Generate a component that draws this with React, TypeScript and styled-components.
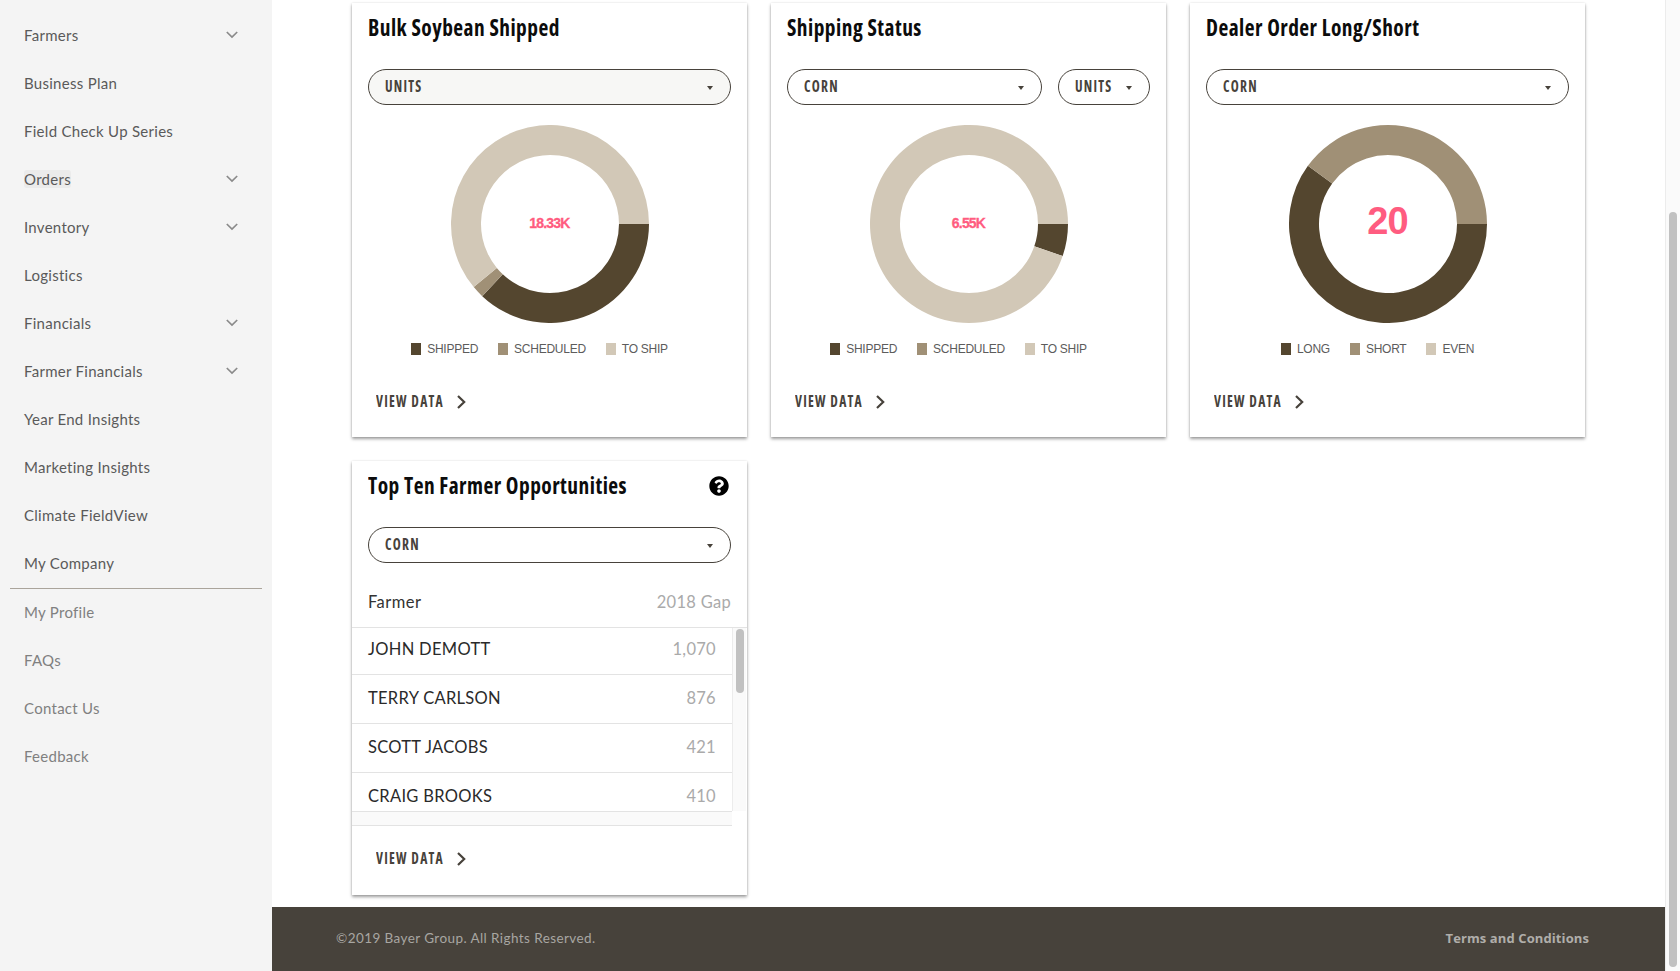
import React, { useLayoutEffect, useRef } from 'react';
import styled, { createGlobalStyle } from 'styled-components';
import { FaQuestionCircle } from 'react-icons/fa';

const Global = createGlobalStyle`
  html, body { margin: 0; padding: 0; height: 100%; overflow: hidden; background: #fff; }
  #root { height: 100%; }
  * { box-sizing: border-box; }
`;

const DARK = '#54462f';
const MID = '#a09076';
const LIGHT = '#d2c8b7';
const BODY_FONT = 'Lato, "Open Sans", sans-serif';
const COND_FONT = '"Open Sans", sans-serif';

const Shell = styled.div`
  display: flex;
  height: 100vh;
  font-family: ${BODY_FONT};
`;
const Scroller = styled.div`
  flex: 1;
  min-width: 0;
  overflow: hidden;
`;
const PageTrack = styled.div`
  width: 15px;
  flex: none;
  display: flex;
  background: #fafafa;
  border-left: 1px solid #ececec;
`;
const PageThumb = styled.div`
  flex: 1;
  margin: 212px 3px 4px 3px;
  border-radius: 4px;
  background: #c1c1c1;
`;
const Page = styled.div`
  display: flex;
  min-height: 1242px;
`;
const Sidebar = styled.nav`
  width: 272px;
  flex: none;
  background: #f4f4f4;
  padding-top: 283px;
`;
const NavItem = styled.a<{ $muted?: boolean }>`
  display: flex;
  align-items: center;
  justify-content: space-between;
  height: 48px;
  padding: 0 34px 2px 24px;
  font-size: 15px;
  letter-spacing: 0.28px;
  color: ${p => (p.$muted ? '#808080' : '#5a5a5a')};
`;
const NavLabel = styled.span<{ $hover?: boolean }>`
  border-radius: 3px;
  background: ${p => (p.$hover ? '#ebebeb' : 'transparent')};
`;
const Divider = styled.hr`
  margin: 0 10px;
  border: 0;
  border-top: 1px solid #aaa49b;
`;
const Main = styled.div`
  flex: 1;
  min-width: 0;
  display: flex;
  flex-direction: column;
`;
const Content = styled.main`
  flex: 1;
  padding: 274px 0 12px 80px;
  display: grid;
  grid-template-columns: repeat(3, 395px);
  grid-auto-rows: 434px;
  gap: 24px;
`;
const Card = styled.section`
  background: #fff;
  padding: 12px 16px 0;
  box-shadow: 0 2px 3px rgba(0, 0, 0, 0.38), 0 0 2px rgba(0, 0, 0, 0.1);
  display: flex;
  flex-direction: column;
`;
const TitleRow = styled.header`
  display: flex;
  align-items: center;
  justify-content: space-between;
  height: 26px;
  color: #000;
  svg { margin-right: 2px; }
`;
const Title = styled.h2`
  margin: -3px 0 0;
  font-family: ${COND_FONT};
  font-stretch: 75%;
  font-weight: 700;
  font-size: 23px;
  letter-spacing: 0.5px;
  line-height: 26px;
  color: #0c0c0c;
  white-space: nowrap;
  transform: scaleX(0.93);
  transform-origin: left center;
`;
const Selects = styled.div`
  display: flex;
  gap: 16px;
  margin-top: 28px;
`;
const Select = styled.div<{ $width?: number; $shaded?: boolean }>`
  flex: ${p => (p.$width ? `0 0 ${p.$width}px` : 1)};
  height: 36px;
  border: 1px solid #47423b;
  border-radius: 18px;
  background: ${p => (p.$shaded ? '#f7f7f5' : '#fff')};
  display: flex;
  align-items: center;
  justify-content: space-between;
  padding: 0 17px 0 16px;
`;
const CondLabel = styled.span`
  font-family: ${COND_FONT};
  font-stretch: 75%;
  font-weight: 700;
  font-size: 16.5px;
  line-height: 20px;
  letter-spacing: 1.5px;
  color: #47423b;
  transform: scaleX(0.82);
  transform-origin: left center;
  margin-top: -3px;
`;
const Caret = styled.i`
  width: 0;
  height: 0;
  margin-top: 2px;
  border-left: 3.5px solid transparent;
  border-right: 3.5px solid transparent;
  border-top: 4px solid #47423b;
`;
const ChartBox = styled.div`
  position: relative;
  width: 198px;
  height: 198px;
  margin: 20px auto 0;
`;
const CenterValue = styled.span<{ $large?: boolean }>`
  position: absolute;
  left: 0;
  right: 0;
  top: ${p => (p.$large ? 77 : 91)}px;
  text-align: center;
  font-family: "Liberation Sans", Arial, sans-serif;
  font-weight: 700;
  color: #ff5c80;
  font-size: ${p => (p.$large ? '38px' : '14px')};
  line-height: 1;
  letter-spacing: ${p => (p.$large ? '-1px' : '-0.8px')};
  -webkit-text-stroke: ${p => (p.$large ? '0' : '0.3px')} #ff5c80;
`;
const Legend = styled.ul`
  list-style: none;
  margin: 18px 0 0;
  padding: 0 20px 0 0;
  display: flex;
  justify-content: center;
  gap: 20px;
  height: 16px;
`;
const LegendItem = styled.li`
  display: flex;
  align-items: center;
  gap: 6px;
  font-family: "Liberation Sans", Arial, sans-serif;
  font-size: 12px;
  letter-spacing: -0.25px;
  color: #5c5c5c;
`;
const Swatch = styled.i<{ $color: string }>`
  width: 10px;
  height: 12px;
  background: ${p => p.$color};
`;
const ViewData = styled.a<{ $gap: number }>`
  display: flex;
  align-items: center;
  gap: 14px;
  height: 20px;
  margin: ${p => p.$gap}px 0 0 8px;
  ${CondLabel} { margin-right: -16px; }
`;
const HeaderRow = styled.div`
  display: flex;
  justify-content: space-between;
  align-items: center;
  height: 22px;
  margin-top: 28px;
  font-size: 16.5px;
  letter-spacing: 0.45px;
  color: #333;
`;
const MutedHead = styled.span`
  color: #aaa;
  letter-spacing: 0.3px;
`;
const List = styled.div`
  margin: 14px -16px 0;
  border-top: 1px solid #e3e3e3;
`;
const ListBody = styled.div`
  display: flex;
  height: 183px;
`;
const Rows = styled.div`
  width: 380px;
  flex: none;
  overflow: hidden;
`;
const VTrack = styled.div`
  width: 14px;
  background: #fafafa;
  border-left: 1px solid #ececec;
`;
const VThumb = styled.div`
  width: 8px;
  height: 64px;
  margin: 1px 0 0 3px;
  border-radius: 4px;
  background: #c1c1c1;
`;
const HTrack = styled.div`
  width: 380px;
  height: 15px;
  background: #fafafa;
  border-top: 1px solid #e3e3e3;
  border-bottom: 1px solid #e3e3e3;
`;
const Row = styled.div`
  display: flex;
  align-items: center;
  justify-content: space-between;
  height: 49px;
  padding: 0 16px 2px;
  border-bottom: 1px solid #e3e3e3;
  font-size: 16.5px;
  letter-spacing: 0.3px;
  color: #2a2a2a;
  &:first-child { height: 47px; padding-bottom: 4px; }
  &:last-child { border-bottom: 0; height: 38px; padding-bottom: 0; align-items: flex-start; padding-top: 13px; }
`;
const RowValue = styled.span`
  color: #aaa;
`;
const Footer = styled.footer`
  height: 64px;
  flex: none;
  background: #47423b;
  display: flex;
  align-items: center;
  justify-content: space-between;
  padding: 0 76px 3px 64px;
  font-size: 13.5px;
  letter-spacing: 0.42px;
  color: #a8a6a2;
`;
const Terms = styled.a`
  font-family: "Open Sans", sans-serif;
  font-size: 13px;
  font-weight: 700;
  letter-spacing: 0.1px;
  color: #b0aeaa;
`;

type Slice = [number, number, string];
function arc(a0: number, a1: number) {
  const R = 99, r = 69, c = 99;
  const p = (rad: number, a: number) => {
    const t = (a * Math.PI) / 180;
    return `${(c + rad * Math.cos(t)).toFixed(2)} ${(c + rad * Math.sin(t)).toFixed(2)}`;
  };
  const large = a1 - a0 > 180 ? 1 : 0;
  return `M${p(R, a0)}A${R} ${R} 0 ${large} 1 ${p(R, a1)}L${p(r, a1)}A${r} ${r} 0 ${large} 0 ${p(r, a0)}Z`;
}
const Donut = ({ slices }: { slices: Slice[] }) => (
  <svg width="198" height="198" viewBox="0 0 198 198">
    {slices.map(([a, b, col]) => <path key={a} d={arc(a, b)} fill={col} />)}
  </svg>
);
const NavChevron = () => (
  <svg width="12" height="8" viewBox="0 0 12 8" fill="none" stroke="#8a8a8a" strokeWidth="1.7">
    <path d="M.8 1l5.2 5 5.2-5" />
  </svg>
);
const LinkChevron = () => (
  <svg width="9" height="14" viewBox="0 0 9 14" fill="none" stroke="#47423b" strokeWidth="2.2">
    <path d="M1 1l6.2 6L1 13" />
  </svg>
);

const topNav: [string, boolean][] = [
  ['Farmers', true], ['Business Plan', false], ['Field Check Up Series', false], ['Orders', true],
  ['Inventory', true], ['Logistics', false], ['Financials', true], ['Farmer Financials', true],
  ['Year End Insights', false], ['Marketing Insights', false], ['Climate FieldView', false], ['My Company', false],
];
const bottomNav = ['My Profile', 'FAQs', 'Contact Us', 'Feedback'];
const farmers: [string, string][] = [
  ['JOHN DEMOTT', '1,070'], ['TERRY CARLSON', '876'], ['SCOTT JACOBS', '421'], ['CRAIG BROOKS', '410'],
];

type ChartCard = {
  title: string;
  selects: { label: string; width?: number; shaded?: boolean }[];
  slices: Slice[];
  value: string;
  large?: boolean;
  legend: string[];
};
const cards: ChartCard[] = [
  {
    title: 'Bulk Soybean Shipped',
    selects: [{ label: 'UNITS', shaded: true }],
    slices: [[0, 133.2, DARK], [133.2, 140.4, MID], [140.4, 360, LIGHT]],
    value: '18.33K',
    legend: ['SHIPPED', 'SCHEDULED', 'TO SHIP'],
  },
  {
    title: 'Shipping Status',
    selects: [{ label: 'CORN' }, { label: 'UNITS', width: 92 }],
    slices: [[0, 18.9, DARK], [18.9, 360, LIGHT]],
    value: '6.55K',
    legend: ['SHIPPED', 'SCHEDULED', 'TO SHIP'],
  },
  {
    title: 'Dealer Order Long/Short',
    selects: [{ label: 'CORN' }],
    slices: [[0, 216, DARK], [216, 360, MID]],
    value: '20',
    large: true,
    legend: ['LONG', 'SHORT', 'EVEN'],
  },
];
const swatches = [DARK, MID, LIGHT];

export default function App() {
  const ref = useRef<HTMLDivElement>(null);
  useLayoutEffect(() => {
    if (ref.current) ref.current.scrollTop = 271;
  }, []);
  return (
    <>
      <Global />
      <Shell>
        <Scroller ref={ref}>
          <Page>
            <Sidebar>
              {topNav.map(([label, more]) => (
                <NavItem key={label}>
                  <NavLabel $hover={label === 'Orders'}>{label}</NavLabel>
                  {more && <NavChevron />}
                </NavItem>
              ))}
              <Divider />
              {bottomNav.map(label => (
                <NavItem key={label} $muted><NavLabel>{label}</NavLabel></NavItem>
              ))}
            </Sidebar>
            <Main>
              <Content>
                {cards.map(c => (
                  <Card key={c.title}>
                    <TitleRow><Title>{c.title}</Title></TitleRow>
                    <Selects>
                      {c.selects.map(s => (
                        <Select key={s.label} $width={s.width} $shaded={s.shaded}>
                          <CondLabel>{s.label}</CondLabel><Caret />
                        </Select>
                      ))}
                    </Selects>
                    <ChartBox>
                      <Donut slices={c.slices} />
                      <CenterValue $large={c.large}>{c.value}</CenterValue>
                    </ChartBox>
                    <Legend>
                      {c.legend.map((l, i) => (
                        <LegendItem key={l}><Swatch $color={swatches[i]} />{l}</LegendItem>
                      ))}
                    </Legend>
                    <ViewData $gap={35}><CondLabel>VIEW DATA</CondLabel><LinkChevron /></ViewData>
                  </Card>
                ))}
                <Card>
                  <TitleRow>
                    <Title>Top Ten Farmer Opportunities</Title>
                    <FaQuestionCircle size={20} />
                  </TitleRow>
                  <Selects>
                    <Select><CondLabel>CORN</CondLabel><Caret /></Select>
                  </Selects>
                  <HeaderRow>Farmer<MutedHead>2018 Gap</MutedHead></HeaderRow>
                  <List>
                    <ListBody>
                      <Rows>
                        {farmers.map(([n, v]) => (
                          <Row key={n}>{n}<RowValue>{v}</RowValue></Row>
                        ))}
                      </Rows>
                      <VTrack><VThumb /></VTrack>
                    </ListBody>
                    <HTrack />
                  </List>
                  <ViewData $gap={23}><CondLabel>VIEW DATA</CondLabel><LinkChevron /></ViewData>
                </Card>
              </Content>
              <Footer>
                <span>©2019 Bayer Group. All Rights Reserved.</span>
                <Terms>Terms and Conditions</Terms>
              </Footer>
            </Main>
          </Page>
        </Scroller>
        <PageTrack><PageThumb /></PageTrack>
      </Shell>
    </>
  );
}
